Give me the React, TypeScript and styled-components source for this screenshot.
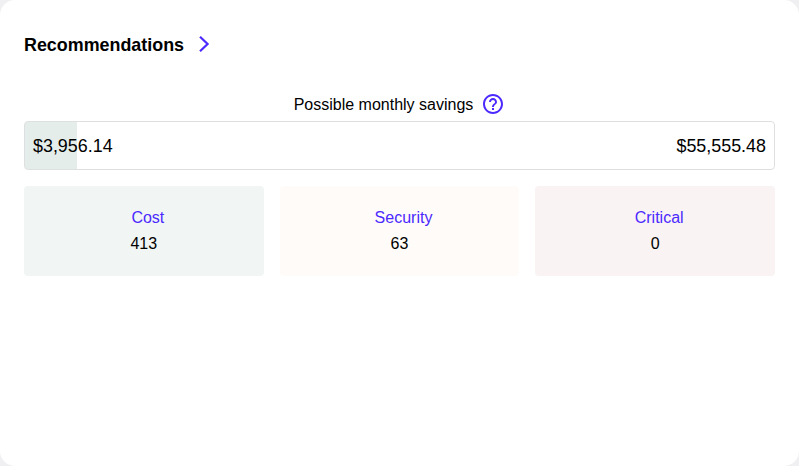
import React from "react";
import styled, { createGlobalStyle } from "styled-components";

const accent = "#4b2aff";

const GlobalStyle = createGlobalStyle`
  *, *::before, *::after { box-sizing: border-box; }
  body {
    margin: 0;
    background: #f0f0f2;
    font-family: "Liberation Sans", Arial, sans-serif;
    color: #000;
  }
`;

const Card = styled.section`
  height: 466px;
  padding: 32px 24px 24px;
  border-radius: 15px;
  background: #fff;
  overflow: hidden;
`;

const Header = styled.header`
  display: flex;
  align-items: center;
  gap: 15px;
  height: 24px;
`;

const Title = styled.h2`
  margin: 0;
  padding-top: 2px;
  font-size: 17.9px;
  line-height: 24px;
  font-weight: 700;
`;

const Chevron = styled.svg`
  display: block;
  flex: none;
  width: 11px;
  height: 16px;
  fill: none;
  stroke: ${accent};
  stroke-width: 2.2;
`;

const HelpIcon = styled.svg`
  display: block;
  flex: none;
  width: 24px;
  height: 24px;
  fill: ${accent};
`;

const SavingsLabel = styled.div`
  display: flex;
  justify-content: center;
  align-items: center;
  gap: 8px;
  height: 24px;
  margin-top: 36px;
  font-size: 16px;
  line-height: 22px;

  span {
    padding-top: 2px;
  }
`;

const SavingsBar = styled.div`
  display: flex;
  justify-content: space-between;
  align-items: center;
  height: 49px;
  margin-top: 5px;
  padding: 0 8px;
  border: 1px solid #dedfe0;
  border-radius: 4px;
  font-size: 17.9px;
  line-height: 22px;
  background: linear-gradient(#e5edea, #e5edea) no-repeat 0 0 / 52px 100%;
`;

const Tiles = styled.div`
  display: grid;
  grid-template-columns: repeat(3, 1fr);
  gap: 16px;
  margin-top: 16px;
`;

const Tile = styled.div<{ $tint: string }>`
  display: flex;
  flex-direction: column;
  align-items: center;
  height: 90px;
  padding-top: 19px;
  border-radius: 4px;
  background: ${({ $tint }) => $tint};
  font-size: 16px;
  line-height: 26px;
`;

const TileLink = styled.a`
  padding-left: 8px;
  color: ${accent};
`;

const tiles = [
  { name: "Cost", count: 413, tint: "#f1f5f4" },
  { name: "Security", count: 63, tint: "#fffbf8" },
  { name: "Critical", count: 0, tint: "#f9f3f3" },
];

export default function App() {
  return (
    <>
      <GlobalStyle />
      <Card>
        <Header>
          <Title>Recommendations</Title>
          <Chevron viewBox="0 0 11 16">
            <path d="M1 .8 8.6 8 1 15.2" />
          </Chevron>
        </Header>
        <SavingsLabel>
          <span>Possible monthly savings</span>
          <HelpIcon viewBox="0 0 24 24">
            <path d="M11 18h2v-2h-2zm1-16C6.48 2 2 6.48 2 12s4.48 10 10 10 10-4.48 10-10S17.52 2 12 2m0 18c-4.41 0-8-3.59-8-8s3.59-8 8-8 8 3.59 8 8-3.59 8-8 8m0-14c-2.21 0-4 1.79-4 4h2c0-1.1.9-2 2-2s2 .9 2 2c0 2-3 1.75-3 5h2c0-2.25 3-2.5 3-5 0-2.21-1.79-4-4-4" />
          </HelpIcon>
        </SavingsLabel>
        <SavingsBar>
          <span>$3,956.14</span>
          <span>$55,555.48</span>
        </SavingsBar>
        <Tiles>
          {tiles.map(({ name, count, tint }) => (
            <Tile key={name} $tint={tint}>
              <TileLink>{name}</TileLink>
              <span>{count}</span>
            </Tile>
          ))}
        </Tiles>
      </Card>
    </>
  );
}
